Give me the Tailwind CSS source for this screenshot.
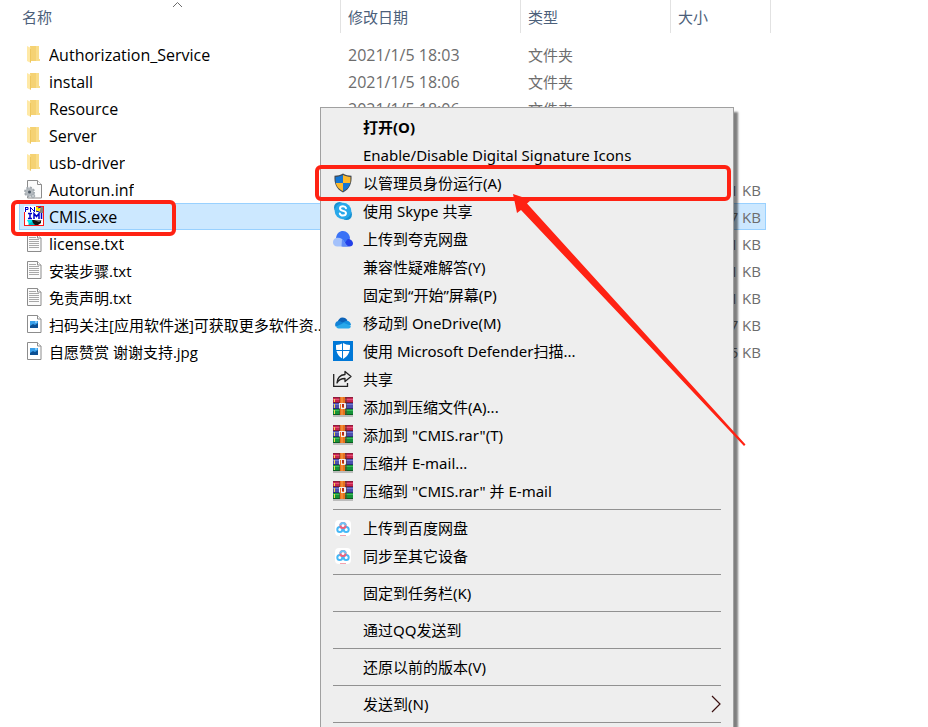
<!DOCTYPE html>
<html lang="zh-CN">

<head>
  <meta charset="UTF-8" />
  <meta name="viewport" content="width=device-width, initial-scale=1.0" />
  <title>CMIS</title>
  <script src="https://cdn.jsdelivr.net/npm/@tailwindcss/browser@4"></script>
</head>

<body class="bg-white text-black font-['Open_Sans','Noto_Sans_CJK_SC',sans-serif] text-[15px] leading-5">
  <!-- Iconos compartidos -->
  <svg class="hidden" aria-hidden="true">
    <symbol id="i-folder" viewBox="0 -1 20 21">
      <path d="M6 1h9v13h1v2H6z" fill="#f5d273" />
      <path d="M12 1h3v13h1v2h-4z" fill="#f9dd8a" />
      <path d="M3 1l4 2v15l-4-2z" fill="#ffe9a6" />
      <path d="M6 3l1 1v14l-1-1z" fill="#eec75f" />
    </symbol>
    <symbol id="i-txt" viewBox="0 0 20 21">
      <path d="M3.500 1.500h10l3.500 3.500v13.500h-13.500z" fill="#fbfbfb" stroke="#8c8c8c" />
      <path d="M13.500 1.500v3.500h3.500" fill="#fff" stroke="#8c8c8c" />
      <path d="M5 4.500h7M5 6.500h10M5 8.500h10M5 10.500h10M5 12.500h10M5 14.500h10" stroke="#a8a8a8" />
    </symbol>
    <symbol id="i-jpg" viewBox="0 0 20 21">
      <path d="M3.500 1.500h10l3.500 3.500v13.500h-13.500z" fill="#fff" stroke="#8c8c8c" />
      <path d="M13.500 1.500v3.500h3.500" fill="#fff" stroke="#8c8c8c" />
      <rect x="6" y="7" width="8" height="7" fill="#3aa0ea" />
      <path d="M6 12l3-2 2 1 3-2v5H6z" fill="#0c4f93" />
      <path d="M11 7h2v2h-2z" fill="#7fc8fa" />
    </symbol>
    <symbol id="i-inf" viewBox="0 -1 20 21">
      <path d="M3.500 .5h10l4 4v13.500h-14z" fill="#fbfbfb" stroke="#8c8c8c" />
      <path d="M13.500 .5v4h4" fill="#fff" stroke="#8c8c8c" />
      <circle cx="5.500" cy="12" r="4.500" fill="#bfc4c8" stroke="#a3aaaf" stroke-width="2" stroke-dasharray="2 1.500" />
      <circle cx="5.500" cy="12" r="3.500" fill="#b3b9be" />
      <circle cx="5.500" cy="12" r="1.500" fill="#4f5b66" />
      <circle cx="9" cy="16" r="1.800" fill="#c3c8cc" stroke="#a3aaaf" />
    </symbol>
    <symbol id="i-exe" viewBox="0 0 20 21">
      <rect x=".5" y=".5" width="19" height="19" fill="#fff" stroke="#ff1a1a" />
      <path d="M0 0h12v6H0z" fill="#fff" />
      <path d="M12 1h6l-3 5h-3z" fill="#ffef00" />
      <path d="M17 1h2v6h-4z" fill="#808080" />
      <path d="M1.500 1v5M1 1.500h3v2H1M6.500 1v5M6 1l4 4M10.500 1v5M14 2l3-1M12 5l3 1" fill="none" stroke="#0000c8" />
      <path d="M3 14h6v4H5z" fill="#00e5f0" />
      <path d="M8 13h9v4l-3 2H9z" fill="#111" />
      <path d="M10 14l5-1 3 1-3 2z" fill="#707070" />
      <path d="M4 18l4-2 3 3H5z" fill="#00b7c4" />
      <path d="M3 7h16v7H3z" fill="#fff" />
      <path d="M4 7.500h4M6 7.500v5M4 12.500h4M10 13V7.500l2.500 3 2.500-3V13M17.500 7v6" fill="none" stroke="#0000c8" stroke-width="1.500" />
    </symbol>
    <symbol id="i-rar" viewBox="0 0 20 20">
      <rect y="18" width="20" height="2" fill="#bcbcbc" />
      <rect width="20" height="6" fill="#c8254f" />
      <rect width="20" height="1" fill="#8e1c3a" />
      <rect y="2" width="20" height="1" fill="#e0527a" />
      <rect y="5" width="20" height="1" fill="#7c1733" />
      <rect y="6" width="20" height="6" fill="#4a4fae" />
      <rect y="7" width="20" height="1" fill="#7478cf" />
      <rect y="11" width="20" height="1" fill="#2b2e76" />
      <rect y="12" width="20" height="6" fill="#159338" />
      <rect y="13" width="20" height="1" fill="#3cb85c" />
      <rect y="17" width="20" height="1" fill="#0a5c20" />
      <path d="M1.500 2v3M1.500 7v4M1.500 13v4" stroke="#f3dc4c" />
      <rect x="6" width="8" height="18" fill="#5a3b28" opacity=".5" />
      <rect x="7" width="5" height="18" fill="#e8701c" />
      <rect x="8" width="2" height="18" fill="#f08a35" />
      <path d="M6.500 6.500h6v5" fill="none" stroke="#f2eded" />
      <path d="M6.500 6v5.500" stroke="#f2eded" />
      <path d="M8 7h1v4h2V7h1v5H8z" fill="#f2eded" />
      <path d="M9 7h2v3H9z" fill="#b52a1b" />
    </symbol>
    <symbol id="i-baidu" viewBox="0 0 20 20">
      <rect x="2" y="2" width="16" height="16" rx="4" fill="#fff" />
      <circle cx="6.800" cy="11.500" r="2.500" fill="none" stroke="#45b8f7" stroke-width="2" />
      <circle cx="13.200" cy="11.500" r="2.500" fill="none" stroke="#45b8f7" stroke-width="2" />
      <circle cx="10" cy="7.500" r="2.600" fill="none" stroke="#f0607c" stroke-width="2" />
      <path d="M7.400 7.500a2.600 2.600 0 0 1 5.200 0" fill="none" stroke="#6bc4f7" stroke-width="2" />
      <path d="M7 17.500h6" stroke="#f3a3b0" />
    </symbol>
  </svg>

  <main class="relative h-screen overflow-hidden">
    <!-- Lista de archivos -->
    <table class="ml-[19px] table-fixed border-separate border-spacing-0 w-[752px]">
      <colgroup>
        <col class="w-[322px]" />
        <col class="w-[180px]" />
        <col class="w-[150px]" />
        <col class="w-[95px]" />
        <col class="w-[5px]" />
      </colgroup>
      <thead class="text-[#4c607a] text-left">
        <tr class="h-[33px]">
          <th class="relative border-r border-[#e2e2e2] p-0 pl-[3px] font-normal">
            <button class="block w-full text-left">名称</button>
            <svg class="absolute left-[153px] top-px" width="11" height="7" viewBox="0 0 11 7" fill="none" stroke="#6b6b6b" aria-hidden="true"><path d="M1 6l4.500-4.500L10 6" /></svg>
          </th>
          <th class="border-r border-[#e2e2e2] p-0 pl-[7px] font-normal"><button class="block w-full text-left">修改日期</button></th>
          <th class="border-r border-[#e2e2e2] p-0 pl-[7px] font-normal"><button class="block w-full text-left">类型</button></th>
          <th colspan="2" class="border-r border-[#e2e2e2] p-0 pl-[7px] font-normal"><button class="block w-full text-left">大小</button></th>
        </tr>
      </thead>
      <tbody class="text-[#6d6d6d]">
        <tr class="h-2"><td colspan="5" class="p-0"></td></tr>
        <tr class="h-[27px]">
          <td class="p-0 pl-[5px]"><div class="flex items-center gap-[5px] text-black"><svg class="w-5 h-[21px] shrink-0"><use href="#i-folder" /></svg><span class="truncate text-base/5">Authorization_Service</span></div></td>
          <td class="p-0 pl-[7px] text-base/5">2021/1/5 18:03</td>
          <td class="p-0 pl-[7px]">文件夹</td>
          <td class="p-0"></td>
          <td class="p-0"></td>
        </tr>
        <tr class="h-[27px]">
          <td class="p-0 pl-[5px]"><div class="flex items-center gap-[5px] text-black"><svg class="w-5 h-[21px] shrink-0"><use href="#i-folder" /></svg><span class="truncate text-base/5">install</span></div></td>
          <td class="p-0 pl-[7px] text-base/5">2021/1/5 18:06</td>
          <td class="p-0 pl-[7px]">文件夹</td>
          <td class="p-0"></td>
          <td class="p-0"></td>
        </tr>
        <tr class="h-[27px]">
          <td class="p-0 pl-[5px]"><div class="flex items-center gap-[5px] text-black"><svg class="w-5 h-[21px] shrink-0"><use href="#i-folder" /></svg><span class="truncate text-base/5">Resource</span></div></td>
          <td class="p-0 pl-[7px] text-base/5">2021/1/5 18:06</td>
          <td class="p-0 pl-[7px]">文件夹</td>
          <td class="p-0"></td>
          <td class="p-0"></td>
        </tr>
        <tr class="h-[27px]">
          <td class="p-0 pl-[5px]"><div class="flex items-center gap-[5px] text-black"><svg class="w-5 h-[21px] shrink-0"><use href="#i-folder" /></svg><span class="truncate text-base/5">Server</span></div></td>
          <td class="p-0"></td>
          <td class="p-0"></td>
          <td class="p-0"></td>
          <td class="p-0"></td>
        </tr>
        <tr class="h-[27px]">
          <td class="p-0 pl-[5px]"><div class="flex items-center gap-[5px] text-black"><svg class="w-5 h-[21px] shrink-0"><use href="#i-folder" /></svg><span class="truncate text-base/5">usb-driver</span></div></td>
          <td class="p-0"></td>
          <td class="p-0"></td>
          <td class="p-0"></td>
          <td class="p-0"></td>
        </tr>
        <tr class="h-[27px]">
          <td class="p-0 pl-[5px]"><div class="flex items-center gap-[5px] text-black"><svg class="w-5 h-[21px] shrink-0"><use href="#i-inf" /></svg><span class="truncate text-base/5">Autorun.inf</span></div></td>
          <td class="p-0"></td>
          <td class="p-0"></td>
          <td class="p-0 pr-[5px] text-right">1 KB</td>
          <td class="p-0"></td>
        </tr>
        <tr class="h-[27px]">
          <td class="border-y border-l border-[#99d1ff] bg-[#cce8ff] p-0 pl-1"><div class="flex items-center gap-[5px] text-black"><svg class="w-5 h-[21px] shrink-0"><use href="#i-exe" /></svg><span class="truncate text-base/5">CMIS.exe</span></div></td>
          <td class="border-y border-[#99d1ff] bg-[#cce8ff] p-0"></td>
          <td class="border-y border-[#99d1ff] bg-[#cce8ff] p-0"></td>
          <td class="border-y border-r border-[#99d1ff] bg-[#cce8ff] p-0 pr-1 text-right">7 KB</td>
          <td class="p-0"></td>
        </tr>
        <tr class="h-[27px]">
          <td class="p-0 pl-[5px]"><div class="flex items-center gap-[5px] text-black"><svg class="w-5 h-[21px] shrink-0"><use href="#i-txt" /></svg><span class="truncate text-base/5">license.txt</span></div></td>
          <td class="p-0"></td>
          <td class="p-0"></td>
          <td class="p-0 pr-[5px] text-right">1 KB</td>
          <td class="p-0"></td>
        </tr>
        <tr class="h-[27px]">
          <td class="p-0 pl-[5px]"><div class="flex items-center gap-[5px] text-black"><svg class="w-5 h-[21px] shrink-0"><use href="#i-txt" /></svg><span class="truncate">安装步骤.txt</span></div></td>
          <td class="p-0"></td>
          <td class="p-0"></td>
          <td class="p-0 pr-[5px] text-right">1 KB</td>
          <td class="p-0"></td>
        </tr>
        <tr class="h-[27px]">
          <td class="p-0 pl-[5px]"><div class="flex items-center gap-[5px] text-black"><svg class="w-5 h-[21px] shrink-0"><use href="#i-txt" /></svg><span class="truncate">免责声明.txt</span></div></td>
          <td class="p-0"></td>
          <td class="p-0"></td>
          <td class="p-0 pr-[5px] text-right">1 KB</td>
          <td class="p-0"></td>
        </tr>
        <tr class="h-[27px]">
          <td class="p-0 pl-[5px]"><div class="flex items-center gap-[5px] text-black"><svg class="w-5 h-[21px] shrink-0"><use href="#i-jpg" /></svg><span class="truncate">扫码关注[应用软件迷]可获取更多软件资...</span></div></td>
          <td class="p-0"></td>
          <td class="p-0"></td>
          <td class="p-0 pr-[5px] text-right">7 KB</td>
          <td class="p-0"></td>
        </tr>
        <tr class="h-[27px]">
          <td class="p-0 pl-[5px]"><div class="flex items-center gap-[5px] text-black"><svg class="w-5 h-[21px] shrink-0"><use href="#i-jpg" /></svg><span class="truncate">自愿赞赏 谢谢支持.jpg</span></div></td>
          <td class="p-0"></td>
          <td class="p-0"></td>
          <td class="p-0 pr-[5px] text-right">5 KB</td>
          <td class="p-0"></td>
        </tr>
      </tbody>
    </table>
    <!-- Fin lista de archivos -->

    <!-- Menú contextual -->
    <div role="menu" class="absolute left-80 top-[107px] -bottom-4 w-[414px] border border-[#a0a0a0] bg-[#eeeeee] pt-[5px] font-['Noto_Sans','Noto_Sans_CJK_SC',sans-serif] shadow-[4px_5px_2px_rgba(0,0,0,0.5)]">
      <button role="menuitem" class="flex h-7 w-full items-center gap-[10px] px-3 font-bold"><span class="w-5"></span>打开(O)</button>
      <button role="menuitem" class="flex h-7 w-full items-center gap-[10px] px-3"><span class="w-5"></span>Enable/Disable Digital Signature Icons</button>
      <button role="menuitem" class="flex h-7 w-full items-center gap-[10px] px-3">
        <svg class="size-5" viewBox="0 0 20 20">
          <path d="M10 .5c2.500 1.500 5.500 2.200 8.500 2.200C19 10 17 16 10 19.500 3 16 1 10 1.500 2.700 4.500 2.700 7.500 2 10 .5z" fill="#454b52" />
          <path d="M10 2v8H2.800c-.3-2-.3-3.800-.2-6C5.300 3.800 7.800 3.200 10 2z" fill="#1476d4" />
          <path d="M10 2c2.200 1.200 4.700 1.800 7.400 2 .1 2.200.1 4-.2 6H10z" fill="#fdb92b" />
          <path d="M2.800 10H10v8.200C5.800 16.200 3.600 13.500 2.800 10z" fill="#fdb92b" />
          <path d="M10 10h7.200c-.8 3.500-3 6.200-7.200 8.200z" fill="#1476d4" />
        </svg>以管理员身份运行(A)
      </button>
      <button role="menuitem" class="flex h-7 w-full items-center gap-[10px] px-3">
        <svg class="size-5" viewBox="0 0 20 20">
          <circle cx="6.500" cy="6.500" r="5.500" fill="#1690d2" />
          <circle cx="13.500" cy="13.500" r="5.500" fill="#1690d2" />
          <circle cx="10" cy="10" r="8.300" fill="#28a8ea" />
          <path d="M13 7.200C12.500 5.800 11.300 5.300 10 5.300c-1.700 0-3 .8-3 2.300 0 3 6 1.600 6 4.500 0 1.600-1.400 2.500-3.100 2.500-1.500 0-2.700-.7-3.100-2.100" fill="none" stroke="#fff" stroke-width="2" stroke-linecap="round" />
        </svg>使用 Skype 共享
      </button>
      <button role="menuitem" class="flex h-7 w-full items-center gap-[10px] px-3">
        <svg class="size-5" viewBox="0 0 20 20">
          <path d="M3 9C3.500 4.500 6.500 2 10 2s6.500 3 7 7l-3 8H6z" fill="#3a72f6" />
          <path d="M9 17.500c3-1 3-5.500 6-7.500 2.500 0 5 2 5 4.500 0 2-1.500 3-3.500 3z" fill="#2340e8" />
          <path d="M3 9c4-1 6.500 1 8 3.500 1.200 2 2.500 4.500 4.500 5h-11C1.500 17.500 0 15.500 0 13.500 0 11 1.500 9.500 3 9z" fill="#a3c1fb" />
          <path d="M9 10c2.500 2 3.500 6 6.500 7.500h-7z" fill="#5f8bf8" />
        </svg>上传到夸克网盘
      </button>
      <button role="menuitem" class="flex h-7 w-full items-center gap-[10px] px-3"><span class="w-5"></span>兼容性疑难解答(Y)</button>
      <button role="menuitem" class="flex h-7 w-full items-center gap-[10px] px-3"><span class="w-5"></span>固定到“开始”屏幕(P)</button>
      <button role="menuitem" class="flex h-7 w-full items-center gap-[10px] px-3">
        <svg class="size-5" viewBox="0 0 20 20">
          <path d="M4.500 9.500C5 6.500 7 4.500 9.500 4.500c2.300 0 4 1.200 4.800 3.200L9 13z" fill="#0b62b8" />
          <path d="M2.500 13.500C1.500 10.500 3 8.200 5.500 8c1.200 0 2 .3 3 1l6 4z" fill="#1282d6" />
          <path d="M8.500 10l5-2.300c2 0 4 1 4.500 4.300L11 13z" fill="#1490df" />
          <path d="M3 13.500L11 10l6.500 2.500c.8 1.500-.3 3-2 3H5.500c-1.200 0-2-.8-2.500-2z" fill="#29a8ea" />
        </svg>移动到 OneDrive(M)
      </button>
      <button role="menuitem" class="flex h-7 w-full items-center gap-[10px] px-3">
        <svg class="size-5" viewBox="0 0 20 20">
          <rect width="20" height="20" fill="#0078d7" />
          <path d="M10 2c2 1.300 4.300 2 7 2 .3 6.500-1.500 11-7 14C4.500 15 2.700 10.500 3 4c2.700 0 5-.7 7-2z" fill="#fff" />
          <path d="M9.500 2v16M2.500 9.500h15" stroke="#0078d7" />
        </svg>使用 Microsoft Defender扫描...
      </button>
      <button role="menuitem" class="flex h-7 w-full items-center gap-[10px] px-3">
        <svg class="size-5" viewBox="0 0 20 20" fill="none" stroke="#222" stroke-width="1.300">
          <path d="M.7 5v12.300h13.800V14" />
          <path d="M12 2.500l6 5-6 5V9.500c-4 0-6.500 1.500-8 4.500.3-5 3-8 8-8.500z" stroke-linejoin="round" />
        </svg>共享
      </button>
      <button role="menuitem" class="flex h-7 w-full items-center gap-[10px] px-3"><svg class="size-5"><use href="#i-rar" /></svg>添加到压缩文件(A)...</button>
      <button role="menuitem" class="flex h-7 w-full items-center gap-[10px] px-3"><svg class="size-5"><use href="#i-rar" /></svg>添加到 "CMIS.rar"(T)</button>
      <button role="menuitem" class="flex h-7 w-full items-center gap-[10px] px-3"><svg class="size-5"><use href="#i-rar" /></svg>压缩并 E-mail...</button>
      <button role="menuitem" class="flex h-7 w-full items-center gap-[10px] px-3"><svg class="size-5"><use href="#i-rar" /></svg>压缩到 "CMIS.rar" 并 E-mail</button>
      <hr class="mx-3 my-1 border-[#919191]" />
      <button role="menuitem" class="flex h-7 w-full items-center gap-[10px] px-3"><svg class="size-5"><use href="#i-baidu" /></svg>上传到百度网盘</button>
      <button role="menuitem" class="flex h-7 w-full items-center gap-[10px] px-3"><svg class="size-5"><use href="#i-baidu" /></svg>同步至其它设备</button>
      <hr class="mx-3 my-1 border-[#919191]" />
      <button role="menuitem" class="flex h-7 w-full items-center gap-[10px] px-3"><span class="w-5"></span>固定到任务栏(K)</button>
      <hr class="mx-3 my-1 border-[#919191]" />
      <button role="menuitem" class="flex h-7 w-full items-center gap-[10px] px-3"><span class="w-5"></span>通过QQ发送到</button>
      <hr class="mx-3 my-1 border-[#919191]" />
      <button role="menuitem" class="flex h-7 w-full items-center gap-[10px] px-3"><span class="w-5"></span>还原以前的版本(V)</button>
      <hr class="mx-3 my-1 border-[#919191]" />
      <button role="menuitem" class="flex h-7 w-full items-center gap-[10px] px-3">
        <span class="w-5"></span>发送到(N)
        <svg class="ml-auto" width="10" height="18" viewBox="0 0 10 18" fill="none" stroke="#3a1010" stroke-width="1.200"><path d="M1 1l8 8-8 8" /></svg>
      </button>
      <hr class="mx-3 my-1 border-[#919191]" />
    </div>
    <!-- Fin menú contextual -->

    <!-- Marcas rojas -->
    <svg class="pointer-events-none absolute left-0 top-0" width="760" height="460" viewBox="0 0 760 460" aria-hidden="true">
      <g fill="none" stroke="#ff2213" stroke-width="4">
        <rect x="13" y="202" width="161" height="32" rx="4" />
        <rect x="317" y="167" width="412" height="32" rx="4" />
      </g>
      <path d="M513 194l18 6-4 3.500L745.500 444.500l-1.500 1.500L521 210l-4 3z" fill="#ff2213" />
    </svg>
  </main>
</body>

</html>
